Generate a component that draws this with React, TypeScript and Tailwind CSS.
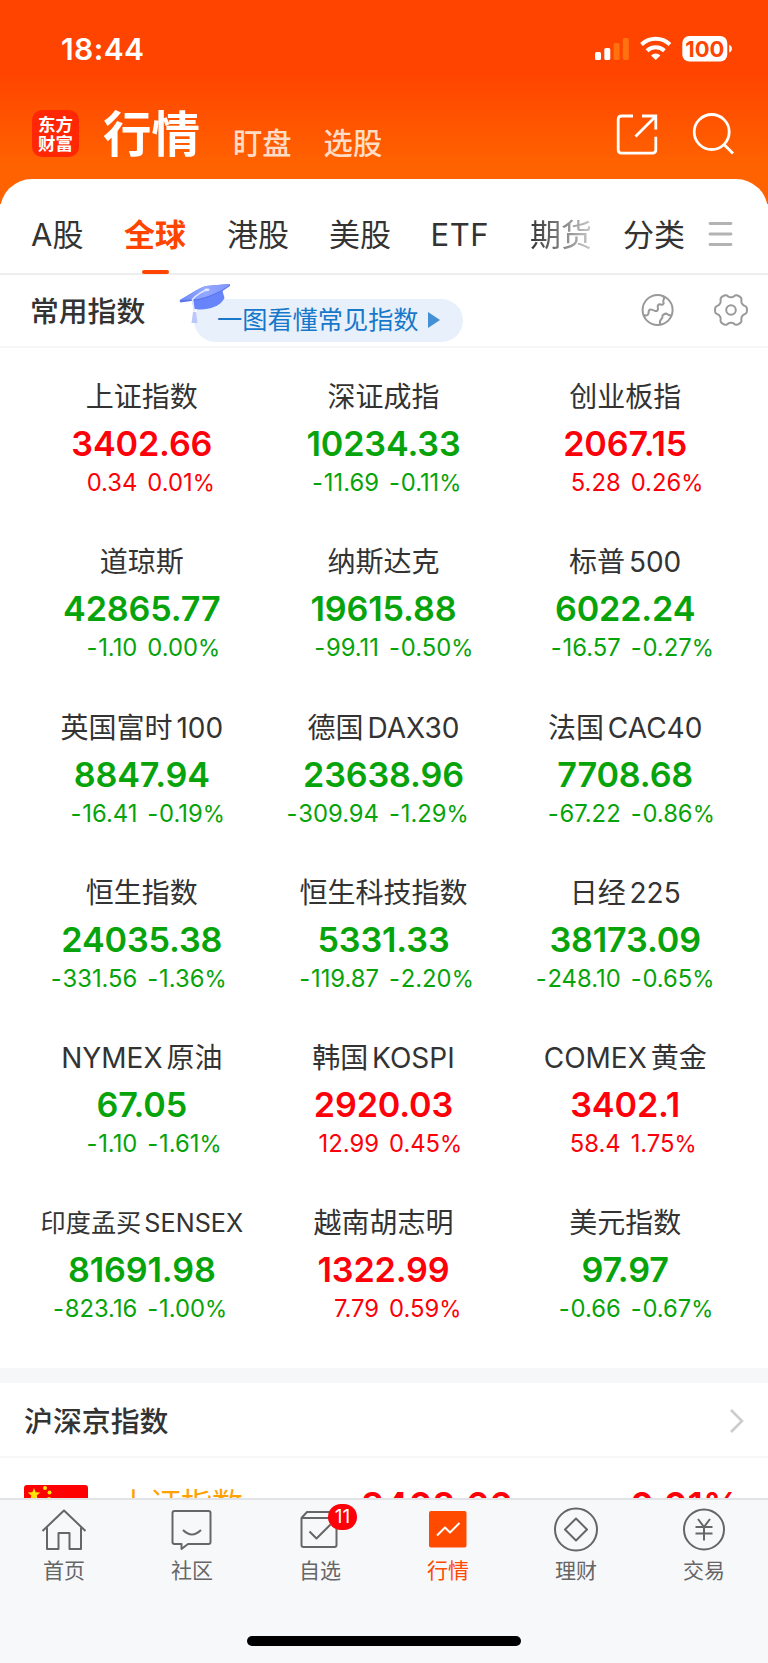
import React from "react";

const latin = "font-[Inter,'Noto_Sans_CJK_SC',sans-serif]";

type Quote = { name: string; value: string; change: string; pct: string; up?: boolean };

const quotes: Quote[] = [
  { name: "上证指数", value: "3402.66", change: "0.34", pct: "0.01%", up: true },
  { name: "深证成指", value: "10234.33", change: "-11.69", pct: "-0.11%" },
  { name: "创业板指", value: "2067.15", change: "5.28", pct: "0.26%", up: true },
  { name: "道琼斯", value: "42865.77", change: "-1.10", pct: "0.00%" },
  { name: "纳斯达克", value: "19615.88", change: "-99.11", pct: "-0.50%" },
  { name: "标普 500", value: "6022.24", change: "-16.57", pct: "-0.27%" },
  { name: "英国富时 100", value: "8847.94", change: "-16.41", pct: "-0.19%" },
  { name: "德国 DAX30", value: "23638.96", change: "-309.94", pct: "-1.29%" },
  { name: "法国 CAC40", value: "7708.68", change: "-67.22", pct: "-0.86%" },
  { name: "恒生指数", value: "24035.38", change: "-331.56", pct: "-1.36%" },
  { name: "恒生科技指数", value: "5331.33", change: "-119.87", pct: "-2.20%" },
  { name: "日经 225", value: "38173.09", change: "-248.10", pct: "-0.65%" },
  { name: "NYMEX 原油", value: "67.05", change: "-1.10", pct: "-1.61%" },
  { name: "韩国 KOSPI", value: "2920.03", change: "12.99", pct: "0.45%", up: true },
  { name: "COMEX 黄金", value: "3402.1", change: "58.4", pct: "1.75%", up: true },
  { name: "印度孟买 SENSEX", value: "81691.98", change: "-823.16", pct: "-1.00%" },
  { name: "越南胡志明", value: "1322.99", change: "7.79", pct: "0.59%", up: true },
  { name: "美元指数", value: "97.97", change: "-0.66", pct: "-0.67%" },
];

function Delta({ text, className = "" }: { text: string; className?: string }) {
  const negative = text.startsWith("-");
  const percent = text.endsWith("%");
  const digits = text.replace(/[-%]/g, "");
  return (
    <span className={className}>
      {negative && <span className="tracking-[0.8px]">-</span>}
      {digits}
      {percent && <span className="text-[22.5px]">%</span>}
    </span>
  );
}

function QuoteCell({ q }: { q: Quote }) {
  return (
    <div className={`flex h-[165.3px] flex-col items-center whitespace-nowrap ${q.up ? "text-[#fd0009]" : "text-[#07a30b]"}`}>
      <div className={`h-11 leading-[45px] text-[#333] [word-spacing:-4px] ${q.name.length > 10 ? "text-[25.2px]" : "text-[28px]"}`}>{q.name}</div>
      <div className="h-[48px] text-[34.2px] leading-[49px] font-semibold tracking-[-0.15px]">{q.value}</div>
      <div className="grid h-[30px] w-full grid-cols-2 gap-[10px] pl-px text-[23.8px] leading-[31px]">
        <Delta text={q.change} className="justify-self-end" />
        <Delta text={q.pct} />
      </div>
    </div>
  );
}

function StatusIcons() {
  return (
    <svg width="138" height="28" viewBox="594 35 138 28">
      <g fill="#fff">
        <rect x="595" y="52" width="6" height="8" rx="1.6" />
        <rect x="604.3" y="48" width="6" height="12" rx="1.6" />
        <rect x="613.6" y="43" width="6" height="17" rx="1.6" fill="#ff720f" />
        <rect x="622.8" y="38" width="6" height="22" rx="1.6" fill="#ff720f" />
        <path d="M655.7 60l-4.700-4.500a6.800 6.800 0 0 1 9.400 0z" />
      </g>
      <g fill="none" stroke="#fff" strokeWidth="4">
        <path d="M641.500 44.500a20.500 20.500 0 0 1 28.400 0" />
        <path d="M647 50.700a12.600 12.600 0 0 1 17.400 0" />
      </g>
      <rect x="682.3" y="36" width="45" height="25.6" rx="7" fill="#fff" />
      <path d="M729.200 44.800c3.600 1.200 3.600 6.600 0 7.800z" fill="#fff" />
      <text x="704.8" y="56.8" textAnchor="middle" fontSize="22" fontWeight="700" fill="#ff4400" className={latin}>100</text>
    </svg>
  );
}

function Header() {
  return (
    <header className="h-[204px] bg-[linear-gradient(180deg,#ff4400_0px,#ff4400_72px,#ff6200_165px,#ff6200_204px)] text-white">
      <div className="flex h-[98px] items-center justify-between pr-9 pl-[61px]">
        <span className="text-[30px] leading-none font-semibold tracking-[0.4px]">18:44</span>
        <StatusIcons />
      </div>
      <div className="flex h-[72px] items-start pr-[33px] pl-8">
        <div className="mt-3 flex h-[47px] w-[47px] flex-col items-center justify-center rounded-[10px] bg-[#ff2704] text-[17.5px] leading-[19px] font-bold">
          <span>东方</span>
          <span>财富</span>
        </div>
        <div className="ml-6 h-[72px] text-[48.5px] leading-[73px] font-bold">行情</div>
        <div className="mt-[7px] ml-[33px] flex gap-8 text-[29.3px] leading-[78px] font-medium text-[#ffdcc6]">
          <span>盯盘</span>
          <span>选股</span>
        </div>
        <svg className="mt-3.5 ml-auto" width="120" height="46" viewBox="615 112 120 46" fill="none" stroke="#fff" strokeWidth="2.8">
          <path d="M633 116h-11.500q-3.300 0-3.300 3.300v30.500q0 3.300 3.300 3.300h31q3.300 0 3.300-3.300v-13M642 116h13.800v13.500M655 117l-19.500 19.500" />
          <circle cx="711.7" cy="132" r="17.500" />
          <path d="M724 144.500l9 9" />
        </svg>
      </div>
    </header>
  );
}

function Tabs() {
  return (
    <nav className="-mt-[25px] flex h-[96px] items-start rounded-t-[32px] border-b-2 border-[#eeeeef] bg-white text-[31px] leading-[112px] whitespace-nowrap text-[#333]">
      <span className="w-[93px] pl-[31px]">A股</span>
      <span className="relative ml-[31px] w-[62px] font-bold text-[#ff4400]">
        全球
        <i className="absolute top-[91px] left-[18px] h-1 w-[27px] rounded-full bg-[#ff4400]" />
      </span>
      <span className="ml-[41px] w-[62px]">港股</span>
      <span className="ml-[40px] w-[62px]">美股</span>
      <span className="ml-[39.5px] w-[60px] tracking-[0.5px]">ETF</span>
      <span className="ml-[39.5px] w-[62px] bg-[linear-gradient(90deg,#333,#777_45%,#ccc)] bg-clip-text text-transparent">期货</span>
      <span className="ml-[31px] w-[62px]">分类</span>
      <svg className="mt-[41px] ml-[23px]" width="25" height="28" viewBox="0 0 25 28" stroke="#b3b3b3" strokeWidth="2.800" strokeLinecap="round">
        <path d="M2 3.500h21M2 14h21M2 24.500h21" />
      </svg>
    </nav>
  );
}

function CapIcon() {
  return (
    <svg className="absolute -top-[17px] -left-[16px]" width="54" height="42" viewBox="178 282 54 42">
      <defs>
        <linearGradient id="cap" x1="0" y1="0" x2="1" y2="0">
          <stop stopColor="#6f8afb" />
          <stop offset=".5" stopColor="#93a8ff" />
          <stop offset="1" stopColor="#8296fb" />
        </linearGradient>
      </defs>
      <path d="M192 299l1.500 9.500c8 2.500 26 .5 31-10.500l-2.500-9z" fill="#6884fb" />
      <path d="M180 300q-1 1 .5 2.500l18-2.500c9-2 17-6 24-9l7.500-5q.5-2-1-2l-23 2q-4 1-10 4.500z" fill="#5c74ee" />
      <path d="M180 300l16-9.500q6-4 10-4.500l23-2q1.500.5 0 1.500l-7 4.500c-8 4-15 7-24 9z" fill="url(#cap)" />
      <path d="M208 290c-4 0-12 5-15.500 9.500l1.700 12" fill="none" stroke="#dfe6ff" strokeWidth="1.600" />
      <ellipse cx="207" cy="289.8" rx="2.600" ry="1.400" fill="#e4eaff" />
      <path d="M193 312h3l1.500 11h-6z" fill="#bcc8fc" />
    </svg>
  );
}

// Six-lobed gear outline centred on (731, 310).
const gearPoints = Array.from({ length: 120 }, (_, i) => {
  const a = (i / 120) * Math.PI * 2;
  const wave = Math.cos(6 * a);
  const r = 14.3 + 1.75 * Math.tanh(1.6 * wave + 0.3);
  return `${(731 + r * Math.cos(a)).toFixed(2)},${(310 + r * Math.sin(a)).toFixed(2)}`;
}).join(" ");

function IndexTitle() {
  return (
    <section className="flex h-[73px] items-start border-b-2 border-[#f6f6f7] bg-white">
      <h2 className="w-[146px] pl-[30px] text-[28.8px] leading-[74px] font-medium text-[#333]">常用指数</h2>
      <div className="relative mt-6 ml-[48px] flex h-[43px] w-[269px] items-center rounded-full bg-[#e8f1fb] pt-px pl-[23px] text-[25.2px] whitespace-nowrap text-[#1778ca]">
        一图看懂常见指数
        <svg className="mb-0.5 ml-[9px]" width="13" height="16" viewBox="0 0 13 16"><path d="M0 0l12 8-12 8z" fill="#4390d6" /></svg>
        <CapIcon />
      </div>
      <svg className="mt-[16px] mr-[18px] ml-auto" width="110" height="38" viewBox="640 291 110 38" fill="none" stroke="#999" strokeWidth="2" strokeLinejoin="round">
        <circle cx="657.6" cy="310" r="15" />
        <path d="M643.500 315q4 1.500 5-1.500 0-4 2-4t4.500 1.500q3 .5 3-2.500-1-4 1.500-4.300 3.500 1.200 4.200-.8-1-2.500 0-4l.5-2q-.7-1.500-2.500-1M660.500 324.500q-1.500-3 .5-5t1.500-4q3-3 5-1.200 1.500 1.500 4.500 1" />
        <polygon points={gearPoints} />
        <circle cx="731" cy="310" r="4.800" />
      </svg>
    </section>
  );
}

function Mainland() {
  return (
    <section className="h-[130px] overflow-hidden border-t-[15px] border-[#f6f7f9] bg-white">
      <div className="flex h-[75px] items-center justify-between border-b-2 border-[#f7f7f8] px-6">
        <h2 className="pt-[4px] text-[28.9px] font-medium text-[#333]">沪深京指数</h2>
        <svg className="mt-0.5" width="15" height="26" viewBox="0 0 15 26" fill="none" stroke="#ccc" strokeWidth="2.600"><path d="M2 2l11 11-11 11" /></svg>
      </div>
      <div className="flex items-start whitespace-nowrap">
        <svg className="mt-[27px] ml-[24px]" width="64" height="42" viewBox="0 0 64 42">
          <rect width="64" height="42" rx="3" fill="#fe0000" />
          <g fill="#ffe60a">
            <path d="M10 3l1.700 4.300 4.600.3-3.600 3 1.200 4.500-3.900-2.500-3.900 2.500 1.200-4.500-3.600-3 4.600-.3z" />
            <circle cx="21" cy="3" r="2" /><circle cx="25.500" cy="7.500" r="2" /><circle cx="25" cy="14" r="2" />
          </g>
        </svg>
        <span className="mt-[24px] ml-[31px] w-[242px] text-[31px] leading-[44px] text-[#ffa200]">上证指数</span>
        <span className="mt-[25px] w-[269px] text-[36.4px] leading-[46px] font-semibold text-[#fd0009]">3402.66</span>
        <span className="mt-[25px] text-[36.4px] leading-[46px] font-semibold text-[#fd0009]">0.01%</span>
      </div>
    </section>
  );
}

const tabs: { label: string; icon: React.ReactNode; active?: boolean; badge?: string }[] = [
  { label: "首页", icon: <path d="M2.500 24L24 3.500 45.500 24M7 20.500V42h11.500V26h11v16H41V20.500" /> },
  { label: "社区", icon: <><path d="M6.500 4h34q2 0 2 2v29q0 2-2 2H20l-6.500 5v-5h-7q-2 0-2-2V6q0-2 2-2z" /><path d="M15 23q9 9 18 0" /></> },
  { label: "自选", badge: "11", icon: <><path d="M5.500 11h35v27q0 2-2 2h-31q-2 0-2-2zL11 5h25l4.500 6M13.500 24.500l7 7 14-14" /></> },
  { label: "行情", active: true, icon: <><rect x="5" y="4" width="37.500" height="36.500" rx="2" fill="#ff4a00" stroke="none" /><path d="M13 28.500l8-8 5 5 9.500-9.500" stroke="#fff" /></> },
  { label: "理财", icon: <><circle cx="24" cy="22.500" r="21" /><path d="M24 11.500l11 11-11 11-11-11z" /></> },
  { label: "交易", icon: <><circle cx="24" cy="22.500" r="20" /><path d="M18 12l6 8 6-8M24 20v13.500M15.500 20h17M15.500 26.500h17" /></> },
];

function BottomBar() {
  return (
    <footer className="flex h-[165px] flex-col items-center border-t-2 border-[#e2e3e6] bg-[#f7f8fa]">
      <div className="grid h-[135px] w-full grid-cols-6">
        {tabs.map((t) => (
          <div key={t.label} className={`relative flex flex-col items-center pt-[7px] text-[21px] leading-[30px] ${t.active ? "text-[#ff4a00]" : "text-[#666]"}`}>
            <svg width="48" height="46" viewBox="0 0 48 46" fill="none" stroke="currentColor" strokeWidth="2" strokeLinejoin="round">{t.icon}</svg>
            <span className="mt-[3px]">{t.label}</span>
            {t.badge && <span className="absolute top-[4px] left-[72px] h-[26px] w-[29px] rounded-full bg-[#fd0009] text-center text-[19px] leading-[26px] text-white">{t.badge}</span>}
          </div>
        ))}
      </div>
      <div className="mt-px h-2.5 w-[274px] rounded-full bg-black" />
    </footer>
  );
}

export default function App() {
  return (
    <main className={`h-[1663px] w-[768px] overflow-hidden bg-white ${latin}`}>
      <Header />
      <Tabs />
      <IndexTitle />
      <section className="grid h-[1020px] grid-cols-3 content-start pt-[27px] pr-[22px] pl-[21px]">
        {quotes.map((q) => <QuoteCell key={q.name} q={q} />)}
      </section>
      <Mainland />
      <BottomBar />
    </main>
  );
}
